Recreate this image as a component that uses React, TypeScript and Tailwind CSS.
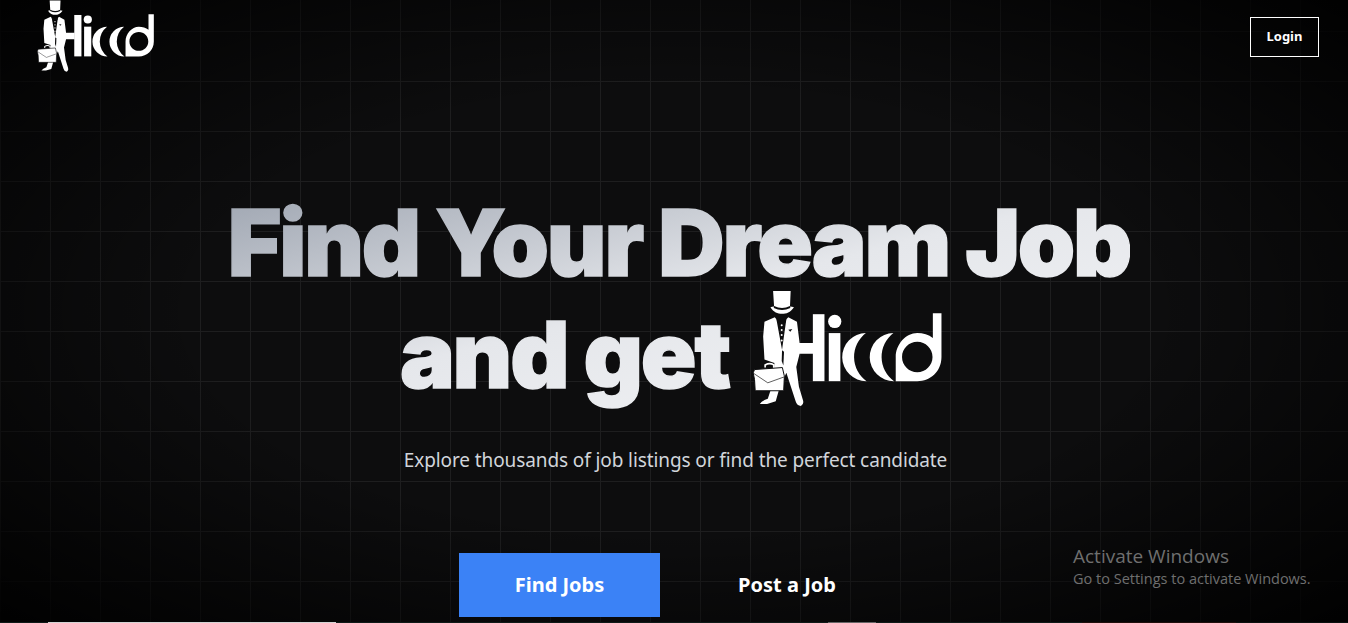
import React from "react";

/** Hat-and-briefcase mark with the Hiccd wordmark. viewBox follows the hero-sized picture. */
function Logo({ className }: { className?: string }) {
  return (
    <svg viewBox="40 30 572 356" className={className} aria-label="Hiccd">
      {/* hat */}
      <path fill="#fff" d="M100 33H153L151 80C155 81 159 81 163 82C152 98 140 102 127 102C113 102 102 97 92 82C95 81 99 81 103 80Z" />
      <path fill="#0d0d0e" d="M103 78Q127 90 151 78L152 84Q127 96 102 84Z" />
      {/* jacket and trousers */}
      <path
        fill="#fff"
        d="M105 112L110 118L127 210L140 118L146 112L172 126L180 190H222V222H180L170 262L178 322L190 362Q194 374 184 380Q172 380 168 366L140 280L118 330L108 366L82 374H60Q66 364 84 358L100 310L104 250L74 240L70 170L74 126Z"
      />
      {/* bow tie and buttons */}
      <path fill="#0d0d0e" d="M110 116L125 121L140 116L138 128L126 125L113 128Z" />
      <circle cx="126" cy="136" r="3" fill="#fff" />
      <circle cx="126" cy="151" r="3" fill="#fff" />
      <circle cx="126" cy="166" r="3" fill="#fff" />
      <circle cx="126" cy="182" r="3" fill="#fff" />
      <path fill="#0d0d0e" d="M146 150L158 148L152 156Z" />
      <path fill="#0d0d0e" d="M127 212L133 216L131 258L126 244Z" />
      {/* briefcase */}
      <path fill="none" stroke="#fff" strokeWidth="5" d="M76 264V256Q90 248 102 256V266" />
      <path fill="#fff" stroke="#0d0d0e" strokeWidth="3" d="M44 270L128 264L134 290L132 334L46 334L44 300L40 280Z" />
      <path fill="none" stroke="#0d0d0e" strokeWidth="2" d="M42 282L84 310L134 292" />
      {/* H */}
      <rect x="220" y="103" width="35" height="202" fill="#fff" />
      {/* i */}
      <circle cx="286" cy="125" r="20" fill="#fff" />
      <rect x="268" y="160" width="35" height="145" fill="#fff" />
      {/* c c */}
      <path fill="#fff" d="M380 160A72 72 0 0 0 382 305A90 90 0 0 1 380 160Z" />
      <path fill="#fff" d="M463 160A72 72 0 0 0 465 305A90 90 0 0 1 463 160Z" />
      {/* d */}
      <path
        fill="#fff"
        fillRule="evenodd"
        d="M582 100H608V232C608 275 575 305 535 305H470V232C470 195 500 160 535 160C552 160 570 165 582 175ZM535 186C510 186 489 206 489 232C489 258 510 278 535 278C560 278 581 258 581 232C581 206 560 186 535 186Z"
      />
    </svg>
  );
}

const bottomEdge = [
  { w: 48, c: "bg-[#0f1a18]" },
  { w: 288, c: "bg-[#d4d4d4]" },
  { w: 492, c: "bg-[#0f1a18]" },
  { w: 48, c: "bg-[#666666]" },
  { w: 206, c: "bg-[#0f1a18]" },
  { w: 154, c: "bg-[#1f0f0c]" },
  { w: 112, c: "bg-[#0a100f]" },
];

export default function App() {
  return (
    <div className="relative h-[623px] overflow-hidden bg-black font-['Noto_Sans','Open_Sans',sans-serif] text-white">
      {/* vignette over grid lines */}
      <div className="flex h-[622px] flex-col bg-[#0d0d0e] bg-[radial-gradient(ellipse_at_center,transparent_50%,rgba(0,0,0,0.95)_100%),linear-gradient(to_right,#1e1e1f_1px,transparent_1px),linear-gradient(to_bottom,#1e1e1f_1px,transparent_1px)] bg-[size:100%_100%,50px_50px,50px_50px] bg-[position:0_0,0_31px,0_31px]">
        <header className="flex items-start justify-between pl-[37px] pr-[29px]">
          <Logo className="h-[73px] w-[118px]" />
          <button className="mt-[17px] h-10 w-[69px] border border-white text-[13px] font-bold">Login</button>
        </header>

        <main className="flex flex-1 flex-col items-center pt-[114px]">
          <h1 className="bg-[linear-gradient(to_bottom_right,#9ca3af_0%,#e5e7eb_50%,#f3f4f6_100%)] bg-clip-text text-center font-['Inter',sans-serif] text-[92px] leading-[112px] font-black tracking-[-2.2px] text-transparent [-webkit-text-stroke:1.5px_transparent]">
            <span className="block pl-[10px]">Find Your Dream Job</span>
            <span className="block pr-[5px]">
              and get <Logo className="my-[-10px] ml-2 inline-block h-[118px] w-[190px] align-[-10px]" />
            </span>
          </h1>
          <p className="mt-[35px] pl-[3px] text-[19px] tracking-[-0.1px] text-[#d1d5db]">Explore thousands of job listings or find the perfect candidate</p>
          <div className="mt-[78px] flex items-center gap-[25px]">
            <button className="h-16 w-[201px] bg-[#3b82f6] text-xl font-bold">Find Jobs</button>
            <button className="h-16 w-[204px] text-xl font-bold">Post a Job</button>
          </div>
        </main>
      </div>

      <div className="flex h-px">
        {bottomEdge.map((s, i) => (
          <div key={i} className={s.c} style={{ width: s.w }} />
        ))}
      </div>

      {/* Windows watermark sits over the page */}
      <div className="absolute top-[544px] left-[1073px] font-['Open_Sans',sans-serif] text-[#6f6f6f]">
        <div className="text-[19px] leading-6">Activate Windows</div>
        <div className="mt-px text-[14.5px] leading-[20px]">Go to Settings to activate Windows.</div>
      </div>
    </div>
  );
}
